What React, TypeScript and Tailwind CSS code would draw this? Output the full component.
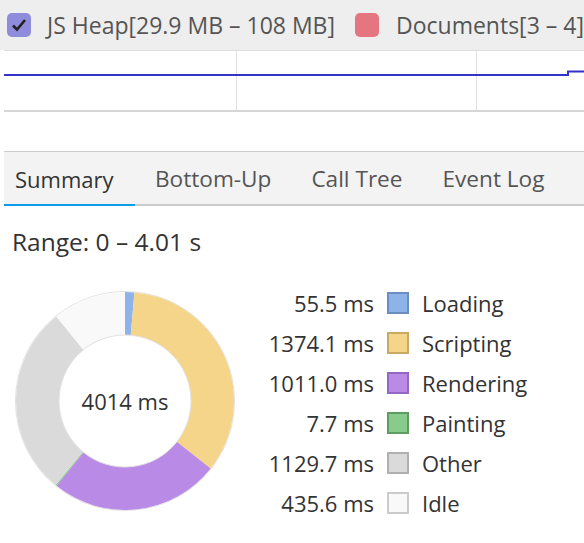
import React from 'react';

const slices = [
  { label: 'Loading', value: 55.5, fill: '#8eb3e8', border: '#6a8ebf' },
  { label: 'Scripting', value: 1374.1, fill: '#f5d589', border: '#c9aa63' },
  { label: 'Rendering', value: 1011.0, fill: '#b98ae6', border: '#9467c2' },
  { label: 'Painting', value: 7.7, fill: '#88cb8c', border: '#5e9c62' },
  { label: 'Other', value: 1129.7, fill: '#dadada', border: '#b0b0b0' },
  { label: 'Idle', value: 435.6, fill: '#f9f9f9', border: '#cbcbcb' },
];

function arcPath(cx: number, cy: number, r0: number, r1: number, a0: number, a1: number) {
  const p = (r: number, a: number) => {
    const t = ((a - 90) * Math.PI) / 180;
    return `${(cx + r * Math.cos(t)).toFixed(2)} ${(cy + r * Math.sin(t)).toFixed(2)}`;
  };
  const large = a1 - a0 > 180 ? 1 : 0;
  return `M ${p(r1, a0)} A ${r1} ${r1} 0 ${large} 1 ${p(r1, a1)} L ${p(r0, a1)} A ${r0} ${r0} 0 ${large} 0 ${p(r0, a0)} Z`;
}

function Donut() {
  const total = slices.reduce((s, x) => s + x.value, 0);
  let angle = 0;
  return (
    <div className="relative w-[222px] h-[222px]">
      <svg width="222" height="222" viewBox="0 0 222 222">
        <circle cx="111" cy="111" r="109.5" fill="none" stroke="#e2e2e2" strokeWidth="1" />
        {slices.map((s) => {
          const a0 = angle;
          const a1 = angle + (s.value / total) * 360;
          angle = a1;
          return <path key={s.label} d={arcPath(111, 111, 66, 109, a0, a1)} fill={s.fill} />;
        })}
        <circle cx="111" cy="111" r="66" fill="none" stroke="#e2e2e2" strokeWidth="1" />
      </svg>
      <div className="absolute inset-0 flex items-center justify-center text-[22px] text-[#333]">4014 ms</div>
    </div>
  );
}

export default function App() {
  const tabs = ['Summary', 'Bottom-Up', 'Call Tree', 'Event Log'];
  return (
    <div className="w-[584px] h-[543px] overflow-hidden bg-white font-['Open_Sans',sans-serif] text-[#333]">
      <div className="h-[50px] bg-[#eeeeee] flex items-center pl-[7px] text-[23px] text-[#555] whitespace-nowrap">
        <span className="shrink-0 w-[24px] h-[24px] rounded-[5px] bg-[#8f8cdb] flex items-center justify-center">
          <svg width="18" height="18" viewBox="0 0 18 18">
            <path d="M3 9.5 L7 13.5 L15 4" fill="none" stroke="#222" strokeWidth="2.6" />
          </svg>
        </span>
        <span className="ml-[16px]">JS Heap[29.9 MB – 108 MB]</span>
        <span className="shrink-0 ml-[20px] w-[24px] h-[24px] rounded-[5px] bg-[#e57681]" />
        <span className="ml-[17px]">Documents[3 – 4]</span>
      </div>

      <div className="ml-[4px] h-[62px] border-t border-[#dedede] border-b-2 border-b-[#d6d6d6]">
        <svg width="580" height="59" viewBox="0 0 580 59" className="block">
          <line x1="232.5" y1="0" x2="232.5" y2="59" stroke="#e2e2e2" />
          <line x1="472.5" y1="0" x2="472.5" y2="59" stroke="#e2e2e2" />
          <path d="M0 24 H564 V20.5 H580" fill="none" stroke="#3333cc" strokeWidth="2" />
        </svg>
      </div>

      <div className="h-[39px]" />

      <div className="ml-[4px] border-t border-[#cccccc] bg-[#f3f3f3] flex h-[55px] border-b-2 border-b-[#cccccc] whitespace-nowrap">
        {tabs.map((t, i) => (
          <div
            key={t}
            className={
              i === 0
                ? 'px-[11px] w-[131px] shrink-0 flex items-center pt-[3px] text-[22px] text-[#333] border-b-2 border-[#0d9ce8] -mb-[2px]'
                : 'px-[20px] flex items-center pt-[1px] text-[22.6px] text-[#555]'
            }
          >
            {t}
          </div>
        ))}
      </div>

      <div className="pl-[12px] pt-[20px] text-[24.5px] leading-[32px] text-[#333]">Range: 0 – 4.01 s</div>

      <div className="flex pl-[14px] pt-[32px]">
        <Donut />
        <div className="ml-[18px] mt-[2px] flex flex-col gap-[18px]">
          {slices.map((s) => (
            <div key={s.label} className="flex items-center h-[22px] text-[22px] text-[#333] whitespace-nowrap">
              <span className="w-[120px] text-right">{s.value.toFixed(1)} ms</span>
              <span
                className="shrink-0 ml-[13px] w-[22px] h-[22px] border-2"
                style={{ background: s.fill, borderColor: s.border }}
              />
              <span className="ml-[13px]">{s.label}</span>
            </div>
          ))}
        </div>
      </div>
    </div>
  );
}
